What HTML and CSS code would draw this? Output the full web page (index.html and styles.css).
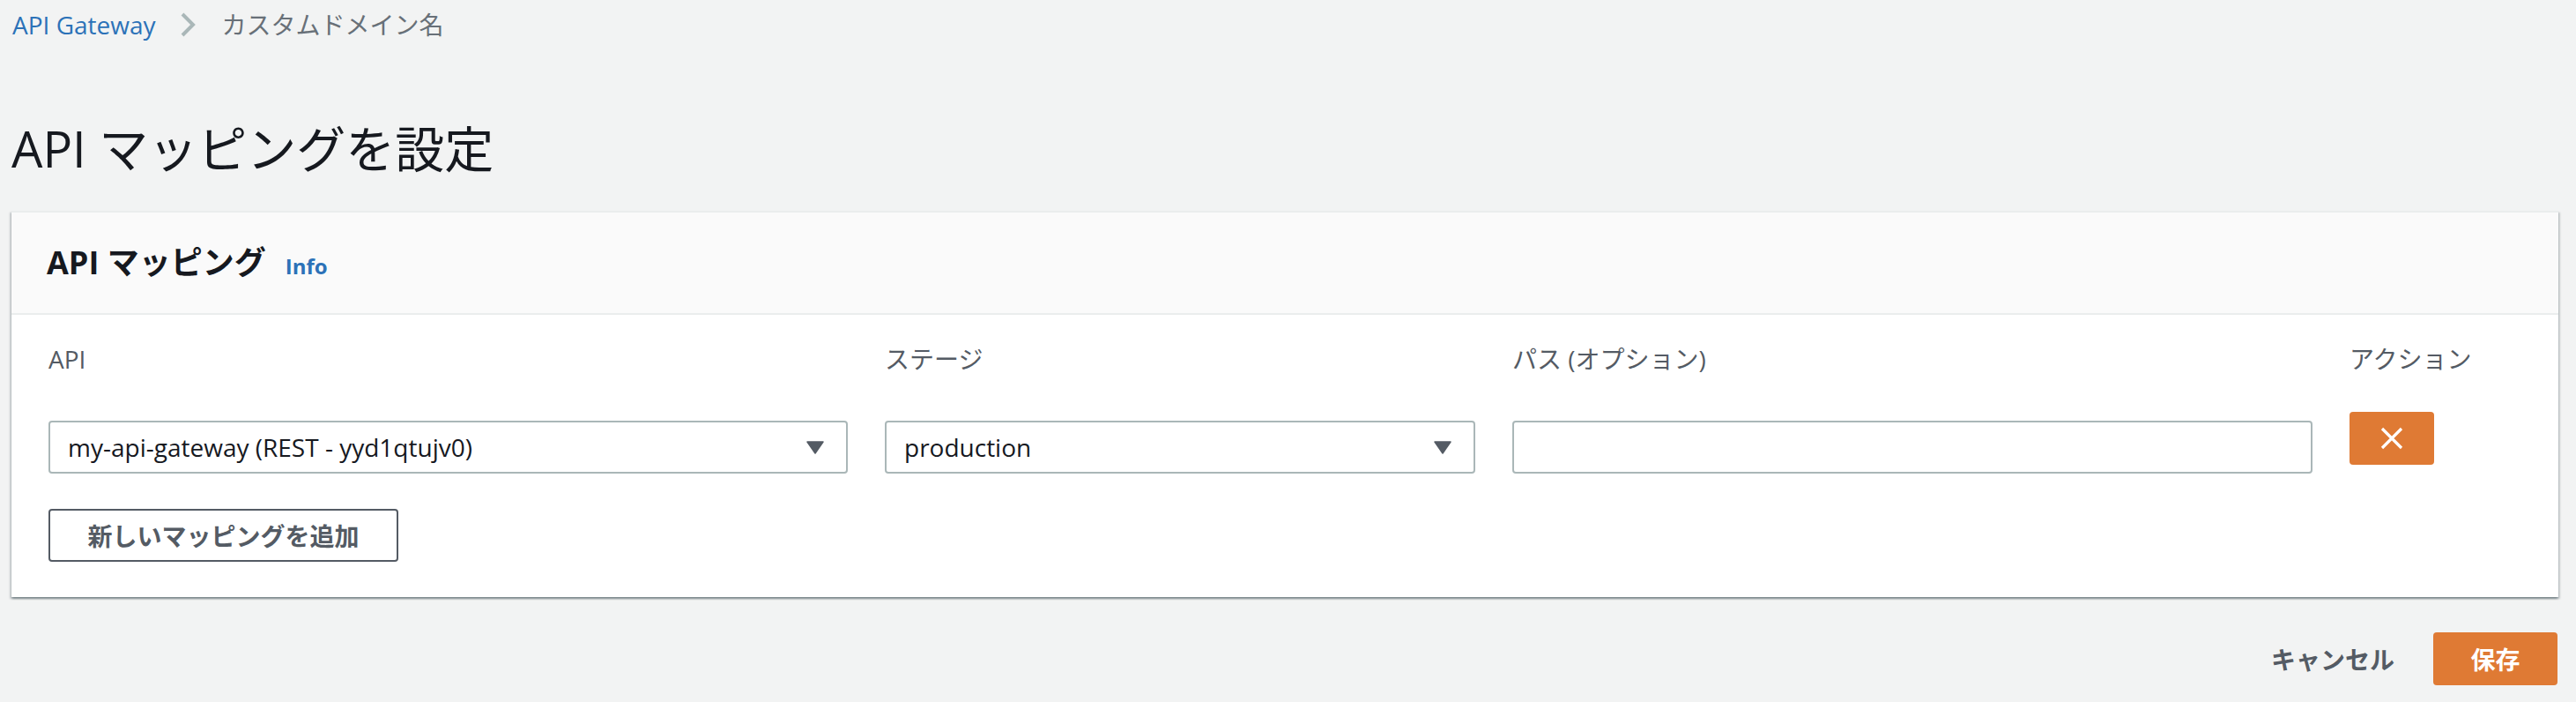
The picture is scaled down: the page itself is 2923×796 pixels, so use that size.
FILE: index.html
```html
<!DOCTYPE html>
<html lang="ja">
<head>
<meta charset="utf-8">
<title>API マッピングを設定</title>
<link rel="stylesheet" href="styles.css">
</head>
<body>
<div class="page">
  <nav class="breadcrumb">
    <a class="crumb-link" href="#">API Gateway</a>
    <svg class="crumb-sep" width="18" height="30" viewBox="0 0 18 30"><path d="M3 3 L15 15 L3 27" fill="none" stroke="#aab7b8" stroke-width="4"/></svg>
    <span class="crumb-current">カスタムドメイン名</span>
  </nav>

  <h1 class="title">API マッピングを設定</h1>

  <section class="card">
    <header class="card-header">
      <h2 class="card-title">API マッピング</h2>
      <a class="info" href="#">Info</a>
    </header>
    <div class="card-body">
      <div class="mapping-row">
        <div class="cell">
          <div class="label">API</div>
          <div class="select">
            <span class="select-value">my-api-gateway (REST - yyd1qtujv0)</span>
            <svg class="caret" width="20" height="15" viewBox="0 0 20 15"><path d="M1 1 L19 1 L10 14 Z" fill="#545b64" stroke="#545b64" stroke-width="1.5" stroke-linejoin="round"/></svg>
          </div>
        </div>
        <div class="cell">
          <div class="label">ステージ</div>
          <div class="select">
            <span class="select-value">production</span>
            <svg class="caret" width="20" height="15" viewBox="0 0 20 15"><path d="M1 1 L19 1 L10 14 Z" fill="#545b64" stroke="#545b64" stroke-width="1.5" stroke-linejoin="round"/></svg>
          </div>
        </div>
        <div class="cell">
          <div class="label">パス (オプション)</div>
          <div class="input"></div>
        </div>
        <div class="cell">
          <div class="label">アクション</div>
          <button class="remove-btn" type="button">
            <svg width="26" height="26" viewBox="0 0 26 26"><path d="M2 2 L24 24 M24 2 L2 24" stroke="#ffffff" stroke-width="3.2" fill="none"/></svg>
          </button>
        </div>
      </div>
      <button class="add-btn" type="button">新しいマッピングを追加</button>
    </div>
  </section>

  <div class="footer">
    <button class="cancel-btn" type="button">キャンセル</button>
    <button class="save-btn" type="button">保存</button>
  </div>
</div>
</body>
</html>
```

FILE: styles.css
```css
* { box-sizing: border-box; }

html, body {
  margin: 0;
  padding: 0;
  background: #f2f3f3;
}

body {
  font-family: "Open Sans", "Noto Sans CJK JP", sans-serif;
  font-size: 28px;
  color: #16191f;
}

.page {
  padding: 0 20px 0 13px;
}

.breadcrumb {
  display: flex;
  align-items: center;
  height: 56px;
  padding-left: 1px;
}

.crumb-link {
  color: #2c72b8;
  text-decoration: none;
  font-size: 28px;
  line-height: 40px;
}

.crumb-sep {
  margin: 0 30px 0 27px;
}

.crumb-current {
  color: #687078;
  font-size: 28px;
  line-height: 40px;
}

.title {
  margin: 76px 0 0 0;
  font-size: 56px;
  font-weight: 400;
  line-height: 72px;
  color: #16191f;
}

.card {
  margin-top: 35px;
  background: #ffffff;
  border-top: 2px solid #eaeded;
  box-shadow: 0 2px 2px 0 rgba(0, 28, 36, 0.3), 2px 2px 2px 0 rgba(0, 28, 36, 0.15), -2px 2px 2px 0 rgba(0, 28, 36, 0.15);
}

.card-header {
  display: flex;
  align-items: center;
  height: 116px;
  padding: 0 40px;
  background: #fafafa;
  border-bottom: 2px solid #eaeded;
}

.card-title {
  margin: 0;
  font-size: 36px;
  font-weight: 700;
  line-height: 44px;
  color: #16191f;
}

.info {
  margin-left: 22px;
  margin-top: 6px;
  font-size: 24px;
  font-weight: 700;
  color: #2c72b8;
  text-decoration: none;
}

.card-body {
  padding: 30px 42px 40px 42px;
}

.mapping-row {
  display: grid;
  grid-template-columns: 907px 670px 908px 1fr;
  column-gap: 42px;
}

.cell {
  display: flex;
  flex-direction: column;
  align-items: stretch;
}

.label {
  height: 40px;
  line-height: 40px;
  color: #545b64;
  font-size: 28px;
}

.select,
.input {
  margin-top: 50px;
  height: 60px;
  border: 2px solid #aab7b8;
  border-radius: 4px;
  background: #ffffff;
  display: flex;
  align-items: center;
  justify-content: space-between;
  padding: 0 25px 0 20px;
}

.select-value {
  font-size: 28px;
  color: #16191f;
  line-height: 40px;
}

.remove-btn {
  margin-top: 40px;
  width: 96px;
  height: 60px;
  border: none;
  border-radius: 4px;
  background: #df7a34;
  display: flex;
  align-items: center;
  justify-content: center;
  padding: 0;
}

.add-btn {
  margin-top: 40px;
  width: 397px;
  height: 60px;
  border: 2px solid #545b64;
  border-radius: 4px;
  background: #ffffff;
  color: #545b64;
  font-family: "Open Sans", "Noto Sans CJK JP", sans-serif;
  font-size: 28px;
  font-weight: 700;
  padding: 0;
}

.footer {
  display: flex;
  justify-content: flex-end;
  align-items: center;
  gap: 44px;
  margin-top: 40px;
  padding-right: 1px;
}

.cancel-btn {
  border: none;
  background: transparent;
  color: #545b64;
  font-family: "Open Sans", "Noto Sans CJK JP", sans-serif;
  font-size: 28px;
  font-weight: 700;
  padding: 0;
  height: 60px;
}

.save-btn {
  width: 141px;
  height: 60px;
  border: none;
  border-radius: 4px;
  background: #df7a34;
  color: #ffffff;
  font-family: "Open Sans", "Noto Sans CJK JP", sans-serif;
  font-size: 28px;
  font-weight: 700;
  padding: 0;
}
```
